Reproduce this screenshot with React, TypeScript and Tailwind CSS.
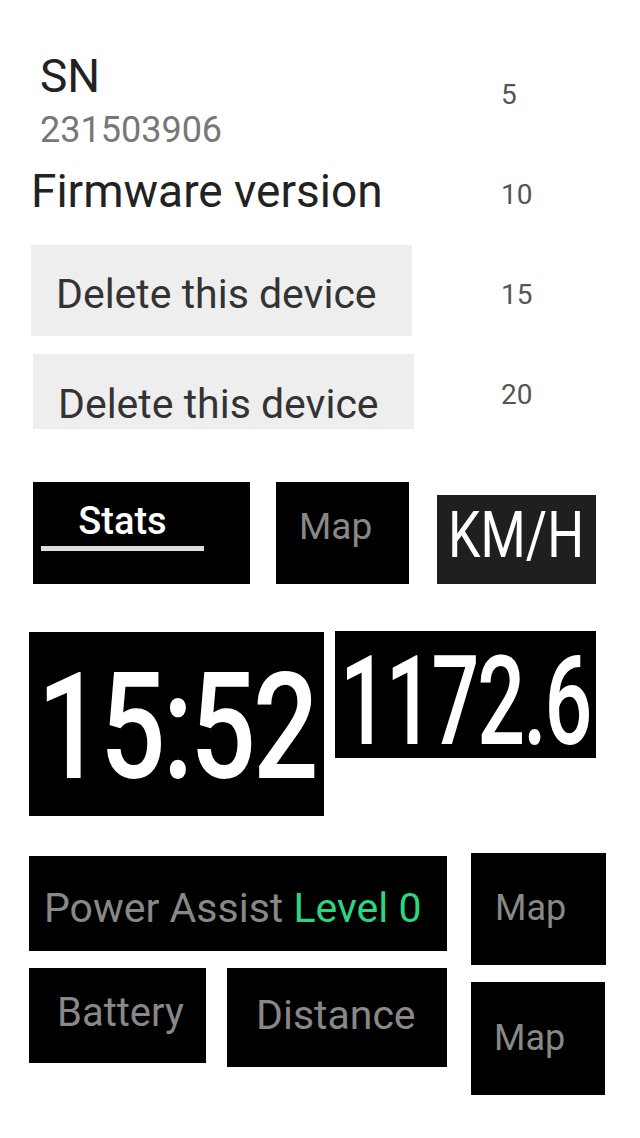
import React from 'react';

const ROWS = ['5', '10', '15', '20'];

function Box({ className, children }: { className: string; children?: React.ReactNode }) {
  return <div className={`bg-black shrink-0 ${className}`}>{children}</div>;
}

export default function App() {
  return (
    <div className="w-[640px] h-[1138px] bg-white overflow-hidden font-['Roboto','Noto_Sans',sans-serif]">
      {/* Device info */}
      <div className="flex pt-[53px]">
        <div className="w-[470px] pl-[31px] flex flex-col">
          <div className="ml-[9px] text-[46px] leading-none text-[#222]">SN</div>
          <div className="ml-[9px] mt-[13px] text-[36px] leading-none text-[#777]">231503906</div>
          <div className="mt-[20px] text-[46px] leading-none text-[#222]">Firmware version</div>
          <div className="mt-[31px] w-[381px] h-[91px] bg-[#eeeeee] pl-[25px] pt-[29px]">
            <span className="text-[41px] leading-none text-[#333]">Delete this device</span>
          </div>
          <div className="mt-[18px] ml-[2px] w-[381px] h-[75px] bg-[#eeeeee] pl-[25px] pt-[30px] overflow-hidden">
            <span className="block text-[41px] leading-none text-[#333]">Delete this device</span>
          </div>
        </div>
        <div className="flex flex-col pl-[31px] pt-[28px] gap-[72px] text-[28px] leading-none text-[#555]">
          {ROWS.map((n) => (
            <span key={n}>{n}</span>
          ))}
        </div>
      </div>

      {/* Tabs */}
      <div className="flex items-end mt-[53px] pl-[33px]">
        <Box className="w-[217px] h-[102px] pl-[8px] pt-[20px]">
          <div className="w-[163px] flex flex-col items-center">
            <span className="text-[38px] leading-none font-medium text-white">Stats</span>
            <div className="mt-[6px] w-full h-[5px] bg-[#dddddd]" />
          </div>
        </Box>
        <Box className="ml-[26px] w-[133px] h-[102px] pl-[23px] pt-[26px]">
          <span className="text-[37px] leading-none text-[#888]">Map</span>
        </Box>
        <div className="ml-[28px] w-[159px] h-[89px] bg-[#1f1f1f] flex justify-center pt-[9px]">
          <span className="inline-block h-[64px] text-[64px] leading-none text-white scale-x-[0.81]">KM/H</span>
        </div>
      </div>

      {/* Big numbers */}
      <div className="flex items-start mt-[47px] pl-[29px]">
        <Box className="mt-[1px] w-[295px] h-[184px] flex justify-center pt-[22px]">
          <span className="inline-block h-[148px] text-[148px] leading-none font-medium text-white tracking-tight scale-x-[0.78]">
            15:52
          </span>
        </Box>
        <Box className="ml-[11px] w-[261px] h-[127px] flex justify-center pt-[9px]">
          <span className="inline-block h-[124px] text-[124px] leading-none font-medium text-white tracking-tight scale-x-[0.68]">
            1172.6
          </span>
        </Box>
      </div>

      {/* Widgets */}
      <div className="flex items-start mt-[37px] pl-[29px]">
        <div className="flex flex-col">
          <Box className="w-[418px] h-[95px] mt-[3px] pl-[15px] pt-[32px]">
            <span className="text-[41px] leading-none text-[#888] whitespace-nowrap">
              Power Assist <span className="text-[#2bd682]">Level 0</span>
            </span>
          </Box>
          <div className="flex items-start mt-[17px]">
            <Box className="w-[177px] h-[95px] pl-[28px] pt-[25px]">
              <span className="text-[40px] leading-none text-[#888]">Battery</span>
            </Box>
            <Box className="ml-[21px] w-[220px] h-[99px] pl-[29px] pt-[27px]">
              <span className="text-[41px] leading-none text-[#888]">Distance</span>
            </Box>
          </div>
        </div>
        <div className="ml-[24px] flex flex-col">
          <Box className="w-[135px] h-[112px] pl-[24px] pt-[37px]">
            <span className="text-[36px] leading-none text-[#888]">Map</span>
          </Box>
          <Box className="mt-[17px] w-[134px] h-[113px] pl-[23px] pt-[38px]">
            <span className="text-[36px] leading-none text-[#888]">Map</span>
          </Box>
        </div>
      </div>
    </div>
  );
}
